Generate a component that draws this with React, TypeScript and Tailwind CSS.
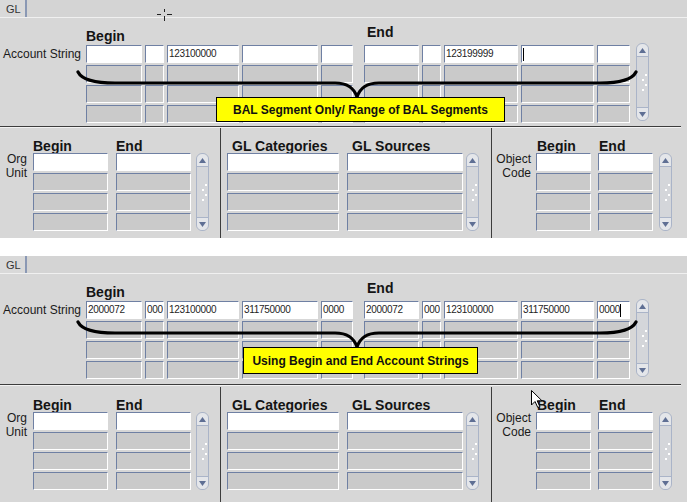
import React from 'react';

type Seg = { w: string; v?: string; caret?: 'start' | 'end' };

const beginW = ['w-[56px]', 'w-[19px]', 'w-[72px]', 'w-[76px]', 'w-[32px]'];
const endW = ['w-[55px]', 'w-[19px]', 'w-[74px]', 'w-[73px]', 'w-[33px]'];

function Field({ w, v, caret, active }: { w: string; v?: string; caret?: 'start' | 'end'; active?: boolean }) {
  return (
    <div
      className={
        'h-[18px] shrink-0 border-t border-l border-t-[#6f80a3] border-l-[#6f80a3] border-r border-b border-r-white border-b-white flex items-center px-[1px] text-[10px] tracking-[-0.3px] leading-none text-[#1e1e1e] overflow-hidden ' +
        w +
        (active ? ' bg-white' : ' bg-[#cacaca]')
      }
    >
      {caret === 'start' && <span className="w-px h-[13px] bg-black" />}
      {v && <span>{v}</span>}
      {caret === 'end' && <span className="w-px h-[13px] bg-black" />}
    </div>
  );
}

function Grid({ segs }: { segs: Seg[] }) {
  return (
    <div className="flex flex-col gap-[2px]">
      {[0, 1, 2, 3].map((r) => (
        <div key={r} className="flex gap-[3px]">
          {segs.map((s, i) =>
            r === 0 ? (
              <Field key={i} w={s.w} v={s.v} caret={s.caret} active />
            ) : (
              <Field key={i} w={s.w} />
            )
          )}
        </div>
      ))}
    </div>
  );
}

function Column({ w }: { w: string }) {
  return (
    <div className="flex flex-col gap-[2px]">
      <Field w={w} active />
      <Field w={w} />
      <Field w={w} />
      <Field w={w} />
    </div>
  );
}

function ScrollBar() {
  return (
    <div className="w-[13px] h-[78px] flex flex-col rounded-[6px] border border-[#aab4c8] bg-[#d4d6da]">
      <div className="h-[13px] rounded-t-[6px] border-b border-[#aab4c8] bg-[#e4e6ea] flex items-center justify-center">
        <svg width="7" height="5" viewBox="0 0 7 5">
          <path d="M0 5 L3.5 0 L7 5 Z" fill="#5f6f94" />
        </svg>
      </div>
      <div className="flex-1 flex flex-col items-end justify-center gap-[3px] pr-[1px]">
        <span className="w-[2px] h-[2px] bg-white" />
        <span className="w-[2px] h-[2px] bg-white mr-[3px]" />
        <span className="w-[2px] h-[2px] bg-white" />
        <span className="w-[2px] h-[2px] bg-white mr-[3px]" />
      </div>
      <div className="h-[13px] rounded-b-[6px] border-t border-[#aab4c8] bg-[#e4e6ea] flex items-center justify-center">
        <svg width="7" height="5" viewBox="0 0 7 5">
          <path d="M0 0 L3.5 5 L7 0 Z" fill="#5f6f94" />
        </svg>
      </div>
    </div>
  );
}

function Heading({ children, cls }: { children: React.ReactNode; cls: string }) {
  return <div className={'text-[14px] font-bold text-[#141414] ' + cls}>{children}</div>;
}

type PanelProps = {
  begin: Seg[];
  end: Seg[];
  note: string;
  bottom?: boolean;
};

function Panel({ begin, end, note, bottom }: PanelProps) {
  const d = bottom ? -6 : 0;
  const brace = `M78 ${72 + d} C 82 ${80 + d}, 95 ${83 + d}, 115 ${83 + d} L 335 ${83 + d} C 348 ${83 + d}, 354 ${88 + d}, 357 ${97 + d} C 360 ${88 + d}, 366 ${83 + d}, 379 ${83 + d} L 600 ${83 + d} C 620 ${83 + d}, 632 ${80 + d}, 636 ${72 + d}`;

  return (
    <div className={'relative w-[687px] bg-[#d7d7d7] flex flex-col ' + (bottom ? 'h-[246px]' : 'h-[238px]')}>
      {/* tab row */}
      <div className="h-[18px] flex border-b border-[#f0f0f0] bg-[#d4d4d4]">
        <div className="w-[27px] border-r-2 border-[#8a98b4] bg-[#d9d9d9] text-[11px] leading-[18px] pl-[6px] text-[#333]">GL</div>
        <div className="flex-1" />
      </div>

      {/* account string */}
      <div className={'flex ' + (bottom ? 'h-[110px]' : 'h-[108px]')}>
        <div className="w-[86px] pr-[5px] pt-[27px] text-right text-[12px] leading-[18px] text-[#1a1a1a] whitespace-nowrap">Account String</div>
        <div className="flex flex-col">
          <Heading cls="h-[27px] pt-[10px] leading-[16px]">Begin</Heading>
          <Grid segs={begin} />
        </div>
        <div className="ml-[11px] flex flex-col">
          <Heading cls="h-[27px] pt-[6px] pl-[3px] leading-[16px]">End</Heading>
          <Grid segs={end} />
        </div>
        <div className="ml-[6px] mt-[25px]">
          <ScrollBar />
        </div>
      </div>

      {/* separator */}
      <div className="h-[2px] border-t border-[#3c3c3c] bg-[#f2f2f2] mr-[6px]" />

      {/* lower */}
      <div className={'flex flex-1 ' + (bottom ? 'pt-[1px]' : '')}>
        <div className="w-[220px] flex">
          <div className="w-[33px] pr-[6px] pt-[24px] text-right text-[12px] leading-[14px] text-[#1a1a1a]">
            <div>Org</div>
            <div>Unit</div>
          </div>
          <div className="flex flex-col">
            <Heading cls="h-[25px] pt-[11px] leading-[14px]">Begin</Heading>
            <Column w="w-[75px]" />
          </div>
          <div className="ml-[8px] flex flex-col">
            <Heading cls="h-[25px] pt-[11px] leading-[14px]">End</Heading>
            <Column w="w-[75px]" />
          </div>
          <div className="ml-[5px] mt-[25px]">
            <ScrollBar />
          </div>
        </div>
        <div className="w-px bg-[#3c3c3c]" />
        <div className="w-[270px] flex pl-[6px]">
          <div className="flex flex-col">
            <Heading cls="h-[25px] pt-[11px] pl-[5px] leading-[14px] whitespace-nowrap">GL Categories</Heading>
            <Column w="w-[112px]" />
          </div>
          <div className="ml-[8px] flex flex-col">
            <Heading cls="h-[25px] pt-[11px] pl-[5px] leading-[14px] whitespace-nowrap">GL Sources</Heading>
            <Column w="w-[116px]" />
          </div>
          <div className="ml-[3px] mt-[25px]">
            <ScrollBar />
          </div>
        </div>
        <div className="w-px bg-[#3c3c3c]" />
        <div className="flex">
          <div className="w-[44px] pr-[5px] pt-[24px] text-right text-[12px] leading-[14px] text-[#1a1a1a]">
            <div>Object</div>
            <div>Code</div>
          </div>
          <div className="flex flex-col">
            <Heading cls="h-[25px] pt-[11px] pl-[1px] leading-[14px]">Begin</Heading>
            <Column w="w-[55px]" />
          </div>
          <div className="ml-[7px] flex flex-col">
            <Heading cls="h-[25px] pt-[11px] pl-[1px] leading-[14px]">End</Heading>
            <Column w="w-[55px]" />
          </div>
          <div className="ml-[6px] mt-[25px]">
            <ScrollBar />
          </div>
        </div>
      </div>

      {/* brace overlay */}
      <svg className="absolute left-0 top-0 pointer-events-none" width="687" height="130">
        <path d={brace} fill="none" stroke="#000" strokeWidth="3.2" strokeLinecap="round" />
      </svg>

      {/* note */}
      <div
        className={
          'absolute border border-black bg-[#ffff00] flex items-center justify-center text-[12px] font-bold text-[#111] whitespace-nowrap ' +
          (bottom ? 'left-[243px] top-[91px] w-[235px] h-[27px]' : 'left-[216px] top-[97px] w-[289px] h-[25px]')
        }
      >
        {note}
      </div>

      {bottom ? (
        <svg className="absolute left-[531px] top-[134px]" width="12" height="19" viewBox="0 0 12 19">
          <path d="M0.5 0.5 L0.5 15 L4 11.5 L6.8 17.5 L8.8 16.6 L6.2 10.8 L11 10.8 Z" fill="#fff" stroke="#000" strokeWidth="1" />
        </svg>
      ) : (
        <svg className="absolute left-[156px] top-[6px]" width="17" height="17" viewBox="0 0 17 17">
          <path d="M8.5 3 V6 M8.5 10 V15 M1 8.5 H5 M11 8.5 H16" stroke="#222" strokeWidth="1" />
        </svg>
      )}
    </div>
  );
}

export default function App() {
  const top: Seg[] = beginW.map((w, i) => ({ w, v: i === 2 ? '123100000' : undefined }));
  const topEnd: Seg[] = endW.map((w, i) => ({
    w,
    v: i === 2 ? '123199999' : undefined,
    caret: i === 3 ? 'start' : undefined,
  }));
  const vals = ['2000072', '000', '123100000', '311750000', '0000'];
  const bot: Seg[] = beginW.map((w, i) => ({ w, v: vals[i] }));
  const botEnd: Seg[] = endW.map((w, i) => ({ w, v: vals[i], caret: i === 4 ? 'end' : undefined }));

  return (
    <div className="w-[687px] h-[502px] bg-white overflow-hidden font-['Liberation_Sans',Arial,sans-serif]">
      <Panel begin={top} end={topEnd} note="BAL Segment Only/ Range of BAL Segments" />
      <div className="h-[18px]" />
      <Panel begin={bot} end={botEnd} note="Using Begin and End Account Strings" bottom />
    </div>
  );
}
